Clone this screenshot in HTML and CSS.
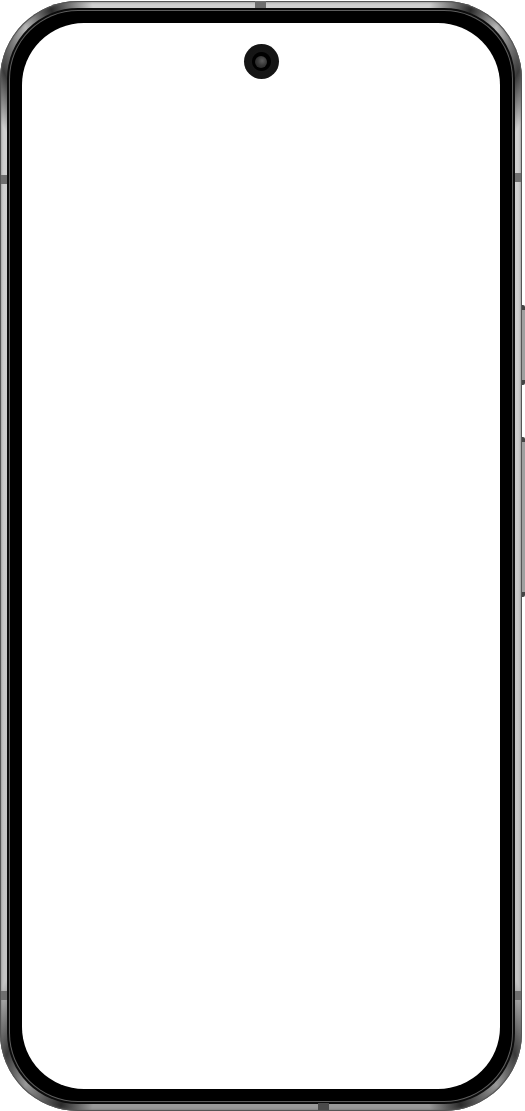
FILE: index.html
```html
<!DOCTYPE html>
<html lang="en">
<head>
    <meta charset="UTF-8">
    <title>Phone frame</title>
    <link rel="stylesheet" href="styles.css">
</head>
<body>
    <div class="phone">
        <div class="side-btn side-btn-top"></div>
        <div class="side-btn side-btn-bottom"></div>
        <div class="metal">
            <div class="seam seam-top"></div>
            <div class="seam seam-bottom"></div>
            <div class="seam seam-left-1"></div>
            <div class="seam seam-left-2"></div>
            <div class="seam seam-right-1"></div>
            <div class="seam seam-right-2"></div>
            <div class="gap">
                <div class="hairline">
                    <div class="bezel">
                        <div class="screen">
                            <div class="camera">
                                <div class="lens"></div>
                            </div>
                        </div>
                    </div>
                </div>
            </div>
        </div>
    </div>
</body>
</html>
```

FILE: styles.css
```css
html, body {
    margin: 0;
    padding: 0;
    background-color: #fff;
}
body {
    width: 525px;
    height: 1111px;
    overflow: hidden;
}
.phone {
    position: relative;
    box-sizing: border-box;
    width: 522px;
    height: 1110px;
    margin-top: 1px;
}
.metal {
    position: relative;
    box-sizing: border-box;
    height: 100%;
    padding: 7px;
    border-radius: 78px;
    background: conic-gradient(
        #d0d0d0 0deg, #d0d0d0 17deg, #2a2a2a 21deg, #b8b8b8 24deg, #3a3a3a 28deg, #d0d0d0 31deg,
        #c4c4c4 149deg, #3a3a3a 153deg, #999 156deg, #2a2a2a 160deg, #999 163deg,
        #999 197deg, #2a2a2a 200deg, #999 204deg, #3a3a3a 207deg, #c4c4c4 211deg,
        #d0d0d0 329deg, #3a3a3a 332deg, #b8b8b8 336deg, #2a2a2a 339deg, #d0d0d0 343deg, #d0d0d0 360deg
    );
    box-shadow: inset 0 0 0 1px #555, inset 0 0 2px 2px rgba(90, 90, 90, 0.35);
}
.gap {
    box-sizing: border-box;
    height: 100%;
    padding: 2px;
    border-radius: 71px;
    background-color: #0c0c0c;
}
.hairline {
    box-sizing: border-box;
    height: 100%;
    padding: 1px;
    border-radius: 69px;
    background-color: #5e5e5e;
}
.bezel {
    box-sizing: border-box;
    height: 100%;
    padding: 12px;
    border-radius: 68px;
    background-color: #000;
}
.screen {
    display: flex;
    justify-content: center;
    box-sizing: border-box;
    height: 100%;
    padding-top: 21px;
    border-radius: 62px;
    background-color: #fff;
}
.camera {
    display: flex;
    align-items: center;
    justify-content: center;
    width: 35px;
    height: 35px;
    border-radius: 50%;
    background: radial-gradient(circle, #000 0, #000 9px, #161616 10px, #121212 100%);
}
.lens {
    width: 12px;
    height: 12px;
    border-radius: 50%;
    background: radial-gradient(circle at 60% 40%, #5c5c5c 0, #383838 45%, #1c1c1c 100%);
}
.seam {
    position: absolute;
    background-color: #6e6e6e;
}
.seam-top {
    top: 0;
    left: 255px;
    width: 11px;
    height: 7px;
}
.seam-bottom {
    bottom: 1px;
    left: 318px;
    width: 11px;
    height: 7px;
    background-color: #4a4a4a;
}
.seam-left-1, .seam-left-2 {
    left: 1px;
    width: 6px;
    height: 9px;
}
.seam-right-1, .seam-right-2 {
    right: 1px;
    width: 6px;
    height: 9px;
}
.seam-left-1 { top: 174px; }
.seam-left-2 { top: 990px; }
.seam-right-1 { top: 172px; }
.seam-right-2 { top: 990px; }
.side-btn {
    position: absolute;
    right: -3px;
    width: 3px;
    border-radius: 0 2px 2px 0;
    background-color: #a0a0a0;
    border-top: 5px solid #444;
    border-bottom: 5px solid #444;
}
.side-btn-top {
    top: 304px;
    height: 70px;
}
.side-btn-bottom {
    top: 436px;
    height: 150px;
}
```
